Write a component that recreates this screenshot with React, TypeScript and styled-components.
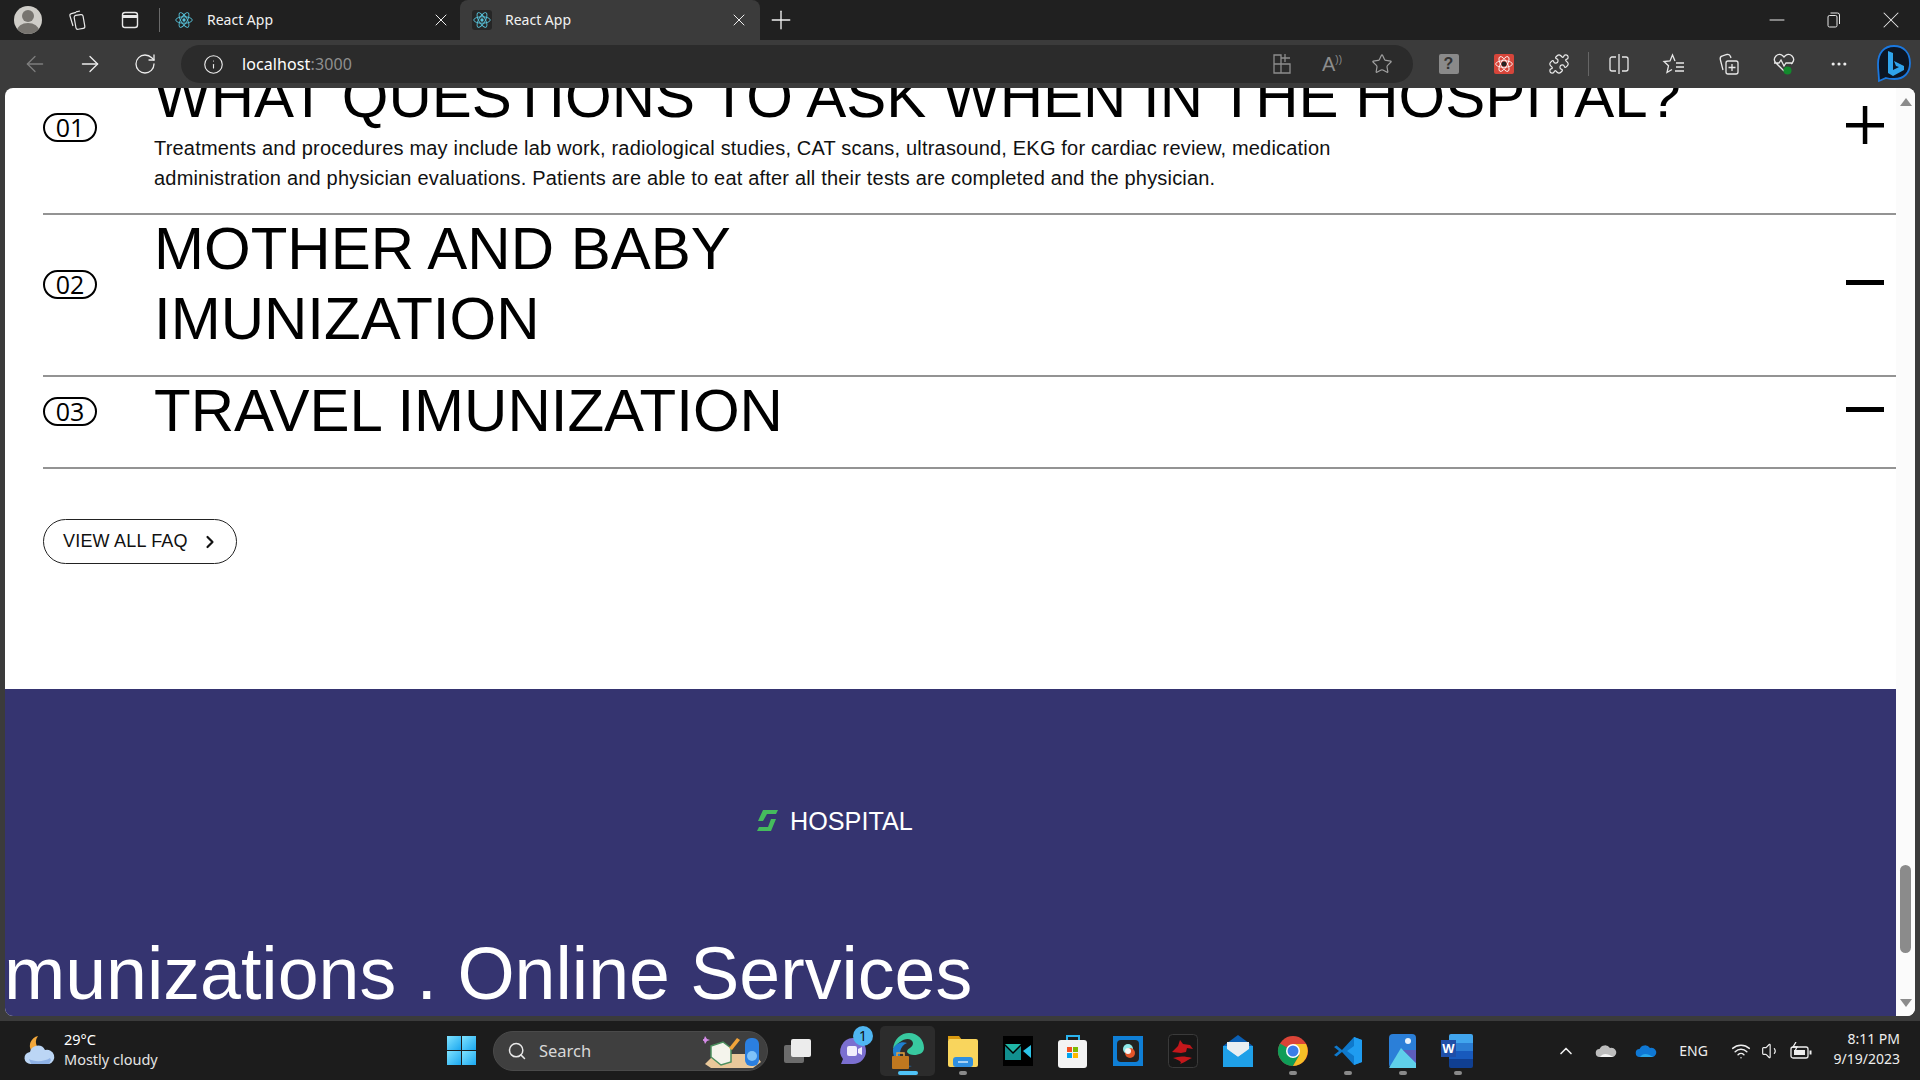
import React from 'react';
import styled, { createGlobalStyle } from 'styled-components';
import {
  ArrowLeft,
  ArrowRight,
  ChevronRight,
  ChevronUp,
  Info,
  Minus,
  MoreHorizontal,
  Plus,
  Puzzle,
  RotateCw,
  Search,
  Star,
  Volume1,
  Wifi,
  X,
} from 'lucide-react';

const GlobalStyle = createGlobalStyle`
  html, body {
    margin: 0;
    padding: 0;
    width: 1920px;
    height: 1080px;
    overflow: hidden;
    background: #3b3b3b;
    font-family: "Liberation Sans", Arial, sans-serif;
  }
  * { box-sizing: border-box; }
`;

const Screen = styled.div`
  width: 1920px;
  height: 1080px;
  display: flex;
  flex-direction: column;
`;

/* ---------- browser chrome ---------- */
const TabStrip = styled.div`
  height: 40px;
  background: #202020;
  display: flex;
  align-items: center;
  color: #fff;
  flex: none;
`;

const Avatar = styled.div`
  width: 28px;
  height: 28px;
  margin-left: 14px;
  border-radius: 50%;
  background: #cfcdc8;
  overflow: hidden;
  flex: none;
`;

const StripSlot = styled.div<{ $first?: boolean; $narrow?: boolean }>`
  width: ${(p) => (p.$narrow ? '42px' : '53px')};
  margin-left: ${(p) => (p.$first ? '8px' : '0')};
  display: flex;
  justify-content: center;
  align-items: center;
  flex: none;
`;

const StripDivider = styled.div`
  width: 1px;
  height: 24px;
  background: #6a6a6a;
  margin: 0 3px 0 3px;
  flex: none;
`;

const Tab = styled.div<{ $active?: boolean }>`
  width: ${(p) => (p.$active ? '300px' : '297px')};
  height: 40px;
  display: flex;
  align-items: center;
  padding-left: ${(p) => (p.$active ? '12px' : '11px')};
  padding-right: ${(p) => (p.$active ? '11px' : '9px')};
  background: ${(p) => (p.$active ? '#3b3b3b' : 'transparent')};
  border-radius: 8px 8px 0 0;
  flex: none;
`;

const FaviconBox = styled.div<{ $active?: boolean }>`
  width: 20px;
  height: 20px;
  display: flex;
  align-items: center;
  justify-content: center;
  background: ${(p) => (p.$active ? '#262626' : 'transparent')};
  border-radius: 3px;
  flex: none;
`;

const TabTitle = styled.span`
  margin-left: 13px;
  padding-bottom: 2px;
  font: 14px "Noto Sans", sans-serif;
  color: #f2f2f2;
  flex: 1;
`;

const WindowControls = styled.div`
  margin-left: auto;
  display: flex;
  align-items: center;
`;

const WindowButton = styled.div`
  width: 57px;
  display: flex;
  justify-content: center;
  align-items: center;
  &:last-child { margin-right: 1px; }
`;

const Toolbar = styled.div`
  height: 48px;
  background: #3b3b3b;
  display: flex;
  align-items: center;
  padding-left: 7px;
  flex: none;
`;

const ToolSlot = styled.div`
  width: 55px;
  height: 38px;
  display: flex;
  align-items: center;
  justify-content: center;
  flex: none;
  color: #ececec;
`;

const AddressBar = styled.div`
  width: 1232px;
  height: 38px;
  margin: 0 8px 0 9px;
  border-radius: 19px;
  background: #2b2b2b;
  display: flex;
  align-items: center;
  padding-left: 22px;
  padding-right: 6px;
  flex: none;
`;

const UrlText = styled.div`
  margin-left: 18px;
  font: 16px "Noto Sans", sans-serif;
  letter-spacing: 0.1px;
  color: #fff;
  span { color: #8f8f8f; }
`;

const AddressActions = styled.div`
  margin-left: auto;
  display: flex;
  color: #8d8d8d;
  ${ToolSlot} { width: 50px; color: #8d8d8d; }
`;

const ReadAloud = styled.span`
  font: 20px "Liberation Sans", sans-serif;
  color: #8d8d8d;
  sup { font-size: 10px; }
`;

const ToolDivider = styled.div`
  width: 1px;
  height: 24px;
  margin: 0 2px;
  background: #666;
  flex: none;
`;

const ExtIcon = styled.div<{ $bg: string }>`
  width: 20px;
  height: 20px;
  border-radius: 2px;
  background: ${(p) => p.$bg};
  color: #333;
  font: bold 16px/20px "Liberation Sans", sans-serif;
  text-align: center;
  display: flex;
  align-items: center;
  justify-content: center;
`;

/* ---------- page ---------- */
const Viewport = styled.div`
  height: 928px;
  padding: 0 5px;
  background: #3b3b3b;
  flex: none;
`;

const Page = styled.div`
  height: 100%;
  background: #fff;
  border-radius: 8px;
  display: flex;
  overflow: hidden;
`;

const PageBody = styled.div`
  flex: 1;
  min-width: 0;
  overflow: hidden;
  display: flex;
  flex-direction: column;
`;

const FaqSection = styled.section`
  height: 601px;
  padding: 0 0 0 38px;
  flex: none;
`;

const FaqList = styled.div`
  margin-top: -26px;
`;

const FaqRow = styled.div`
  display: flex;
  align-items: center;
  padding-bottom: 21px;
  border-bottom: 2px solid #939393;
  color: #000;
  &:first-child { padding-bottom: 20px; }
`;

const Pill = styled.div`
  width: 54px;
  height: 29px;
  border: 2px solid #000;
  border-radius: 15px;
  font: 25px/25px "Open Sans", sans-serif;
  text-align: center;
  flex: none;
`;

const FaqBody = styled.div`
  margin-left: 57px;
  flex: 1;
`;

const FaqTitle = styled.h3`
  margin: -1px 0 0;
  font: 400 60px/70px "Liberation Sans", Arial, sans-serif;
  white-space: pre-line;
  ${FaqRow}:first-child & { margin-top: 0; }
`;

const FaqText = styled.p`
  margin: 1px 0 0;
  width: 1220px;
  font: 20px/30px "Liberation Sans", Arial, sans-serif;
  letter-spacing: 0.19px;
  color: #111;
`;

const ToggleIcon = styled.div`
  width: 38px;
  margin-right: 12px;
  margin-top: -5px;
  display: flex;
  justify-content: center;
  flex: none;
`;

const ViewAll = styled.button`
  margin-top: 50px;
  width: 194px;
  height: 45px;
  border: 1.5px solid #222;
  border-radius: 23px;
  background: #fff;
  display: flex;
  align-items: center;
  padding: 0 0 0 19px;
  font: 18px "Liberation Sans", Arial, sans-serif;
  letter-spacing: 0.2px;
  color: #111;
  svg { margin-left: 12px; }
`;

const Footer = styled.footer`
  flex: 1;
  background: #353470;
  color: #fff;
  overflow: hidden;
  padding-top: 117px;
`;

const Brand = styled.div`
  margin-left: 751px;
  display: flex;
  align-items: center;
  font: 25.200px/30px "Liberation Sans", Arial, sans-serif;
  gap: 12px;
`;

const Marquee = styled.div`
  margin-top: 93px;
  margin-left: -1px;
  font: 73.500px/90px "Liberation Sans", Arial, sans-serif;
  white-space: nowrap;
`;

const Scrollbar = styled.div`
  width: 19px;
  background: #fbfbfb;
  display: flex;
  flex-direction: column;
  align-items: center;
  flex: none;
  padding: 10px 0 9px;
`;

const Arrow = styled.div<{ $down?: boolean }>`
  width: 0;
  height: 0;
  border-left: 6px solid transparent;
  border-right: 6px solid transparent;
  ${(p) =>
    p.$down ? 'border-top: 8px solid #8b8b8b;' : 'border-bottom: 8px solid #8b8b8b;'}
`;

const Thumb = styled.div`
  width: 11px;
  height: 88px;
  margin: auto 0 46px;
  border-radius: 6px;
  background: #8b8b8b;
`;

/* ---------- taskbar ---------- */
const TaskbarGap = styled.div`
  height: 5px;
  background: #3b3b3b;
  flex: none;
`;

const Taskbar = styled.div`
  flex: 1;
  background: #1c1c1c;
  display: flex;
  align-items: center;
  color: #fff;
  position: relative;
`;

const Weather = styled.div`
  width: 447px;
  display: flex;
  align-items: center;
  padding-left: 24px;
  flex: none;
`;

const WeatherText = styled.div`
  margin-left: 8px;
  padding-bottom: 3px;
  font: 14.500px/20px "Noto Sans", sans-serif;
  color: #e4e4e4;
  div:first-child { color: #fff; }
`;

const StartButton = styled.div`
  width: 29px;
  height: 29px;
  display: grid;
  grid-template-columns: 1fr 1fr;
  gap: 1px;
  flex: none;
`;

const StartPane = styled.div`
  background: linear-gradient(135deg, #7fe3ff, #1aa7f0);
`;

const SearchPill = styled.div`
  width: 275px;
  height: 40px;
  margin-left: 17px;
  border-radius: 20px;
  background: #3f3f3f;
  border: 1px solid #4a4a4a;
  display: flex;
  align-items: center;
  padding-left: 13px;
  font: 16.500px "Noto Sans", sans-serif;
  color: #d8d8d8;
  gap: 12px;
  flex: none;
  svg:last-child { margin-left: auto; margin-right: 6px; }
`;

const RailSpacer = styled.span`
  width: 2px;
  flex: none;
`;

const AppSlot = styled.div<{ $hover?: boolean }>`
  width: 55px;
  height: 50px;
  display: flex;
  align-items: center;
  justify-content: center;
  border-radius: 5px;
  position: relative;
  background: ${(p) => (p.$hover ? '#2c2c2c' : 'transparent')};
  flex: none;
`;

const RunDot = styled.div<{ $active?: boolean }>`
  position: absolute;
  bottom: 1px;
  left: 50%;
  width: ${(p) => (p.$active ? '20px' : '8px')};
  height: 4px;
  transform: translateX(-50%);
  border-radius: 2px;
  background: ${(p) => (p.$active ? '#4fc3f7' : '#8a8a8a')};
`;

const Badge = styled.div`
  position: absolute;
  top: 0;
  right: 7px;
  width: 20px;
  height: 20px;
  border-radius: 50%;
  background: #4fb6f2;
  color: #111;
  font: 14px/20px "Noto Sans", sans-serif;
  text-align: center;
`;

const Tray = styled.div`
  margin-left: auto;
  display: flex;
  align-items: center;
  padding-right: 20px;
`;

const TraySlot = styled.div<{ $w: number }>`
  width: ${(p) => p.$w}px;
  display: flex;
  justify-content: center;
  align-items: center;
  font: 14px "Noto Sans", sans-serif;
  color: #eee;
`;

const Clock = styled.div`
  margin-left: 14px;
  padding-bottom: 3px;
  text-align: right;
  font: 14px/20px "Noto Sans", sans-serif;
  color: #eee;
`;

/* ---------- drawn icons ---------- */
const ReactLogo = () => (
  <svg width="18" height="18" viewBox="-12 -12 24 24" fill="none" stroke="#58c4dc" strokeWidth="1.2">
    <circle r="2.2" fill="#58c4dc" stroke="none" />
    <ellipse rx="11" ry="4.3" />
    <ellipse rx="11" ry="4.3" transform="rotate(60)" />
    <ellipse rx="11" ry="4.3" transform="rotate(120)" />
  </svg>
);

const CollectionsStack = () => (
  <svg width="22" height="22" viewBox="0 0 22 22" fill="none" stroke="#e8e8e8" strokeWidth="1.2">
    <rect x="9" y="6" width="9" height="14" rx="2" transform="rotate(-10 13 13)" />
    <path d="M7 17 4 7a2 2 0 0 1 1.400-2.400L10 3.400" />
    <path d="M10 2.800 14 2" />
  </svg>
);

const TabsIcon = () => (
  <svg width="20" height="20" viewBox="0 0 20 20" fill="none" stroke="#e8e8e8" strokeWidth="1.4">
    <rect x="2.500" y="2.500" width="15" height="15" rx="2.500" />
    <path d="M2.500 6.500h15" strokeWidth="3" />
  </svg>
);

const RestoreIcon = () => (
  <svg width="14" height="16" viewBox="0 0 14 16" fill="none" stroke="#e8e8e8" strokeWidth="1">
    <rect x="1" y="3.500" width="9" height="11.500" rx="1.500" />
    <path d="M3.500 1h7a2 2 0 0 1 2 2v9" />
  </svg>
);

const GridPlus = () => (
  <svg width="20" height="24" viewBox="0 0 20 24" fill="none" stroke="#8d8d8d" strokeWidth="1.3">
    <path d="M2 3h7v18H2zM2 12h16v9H9M13 2v8M9.500 6H18" />
  </svg>
);

const SplitIcon = () => (
  <svg width="22" height="24" viewBox="0 0 22 24" fill="none" stroke="#e8e8e8" strokeWidth="1.3">
    <path d="M8 5H4a2 2 0 0 0-2 2v10a2 2 0 0 0 2 2h4M14 5h4a2 2 0 0 1 2 2v10a2 2 0 0 1-2 2h-4M11 2v20" />
  </svg>
);

const FavoritesIcon = () => (
  <svg width="24" height="24" viewBox="0 0 24 24" fill="none" stroke="#e8e8e8" strokeWidth="1.3">
    <path d="M13 9 10.500 3 8 9l-6 .6 4.500 4.200L5 20.500l5-3" />
    <path d="M14 11h8M14 15h8M13 19h9" />
  </svg>
);

const CollectionsIcon = () => (
  <svg width="22" height="24" viewBox="0 0 22 24" fill="none" stroke="#e8e8e8" strokeWidth="1.3">
    <rect x="8" y="9" width="12" height="13" rx="2" />
    <path d="M14 12v7M10.500 15.500h7M5 18 2.300 7.500a3 3 0 0 1 2.200-3.600L9 2.500a3 3 0 0 1 3.500 2L13 6" />
  </svg>
);

const HealthIcon = () => (
  <svg width="24" height="26" viewBox="0 0 24 26">
    <path
      d="M12 20 3.500 11.500a5 5 0 0 1 7-7L12 6l1.500-1.500a5 5 0 0 1 7 7L19 13M2 12h5l2-3 3 6 2-3h7"
      fill="none"
      stroke="#e8e8e8"
      strokeWidth="1.3"
    />
    <circle cx="15.500" cy="19.500" r="4" fill="#138a2d" />
  </svg>
);

const BingLogo = () => (
  <svg width="38" height="40" viewBox="0 0 38 40">
    <path
      d="M19 2C9 2 3 9 3 20c0 6 1 12 1 17l7-3c3 1 5 1 8 1 10 0 16-6 16-16S29 2 19 2z"
      fill="#0c1524"
      stroke="#1a78e0"
      strokeWidth="1.800"
    />
    <path d="M13 7l5 2v17l6-3-3-1-2-5 10 5v4l-11 6-5-3z" fill="#2fa3ec" />
  </svg>
);

const AtomExt = () => (
  <svg width="20" height="20" viewBox="-12 -12 24 24" fill="none" stroke="#fff" strokeWidth="1">
    <ellipse rx="10" ry="4" />
    <ellipse rx="10" ry="4" transform="rotate(60)" />
    <ellipse rx="10" ry="4" transform="rotate(120)" />
    <circle r="3" fill="#222" stroke="none" />
  </svg>
);

const HospitalMark = () => (
  <svg width="22" height="22" viewBox="0 0 22 22" fill="#45bb5d">
    <path d="M7 0H22L20 4H11L7 11H2z" />
    <path d="M15 9h5l-5 12H1l2-4h9z" />
  </svg>
);

const PlusMark = () => (
  <svg width="38" height="38" viewBox="0 0 38 38" fill="#000">
    <rect x="0" y="17" width="38" height="4.500" />
    <rect x="16.800" y="0" width="4.500" height="38" />
  </svg>
);

const MinusMark = () => (
  <svg width="38" height="38" viewBox="0 0 38 38" fill="#000">
    <rect x="0" y="17" width="38" height="5" />
  </svg>
);

const WeatherIcon = () => (
  <svg width="32" height="32" viewBox="0 0 32 32">
    <path d="M14 1a10 10 0 0 0 8 16H8A10 10 0 0 1 14 1z" fill="#f3a83b" />
    <path d="M7 29a6 6 0 0 1-1-12 8 8 0 0 1 15-2 7 7 0 0 1 4 14z" fill="#bcd6f5" />
    <path d="M5 24c5 3 15 3 21-1l1 2-2 4H7z" fill="#8fb2e6" />
  </svg>
);

const SearchArt = () => (
  <svg width="58" height="38" viewBox="0 0 58 38">
    <path d="M2 32 12 22h40l6 8-8 6H8z" fill="#e9c89a" />
    <path d="M8 14 20 10l8 6v14l-10 3-10-8z" fill="#f4f4ec" stroke="#4b8f5e" strokeWidth="1.500" />
    <path d="M26 16 34 6l3 2-8 10z" fill="#f2a43a" />
    <rect x="42" y="6" width="14" height="28" rx="6" fill="#2b7fe0" />
    <circle cx="49" cy="24" r="5" fill="#7fc2f8" />
    <path d="M2 4l2 3 3 1-3 1-2 3-1-3-3-1 3-1z" fill="#d58be8" />
  </svg>
);

const TaskView = () => (
  <svg width="30" height="30" viewBox="0 0 30 30">
    <rect x="1" y="9" width="20" height="18" rx="2" fill="#6c6c6c" />
    <rect x="8" y="3" width="20" height="18" rx="2" fill="#ececec" />
  </svg>
);

const TeamsIcon = () => (
  <svg width="32" height="32" viewBox="0 0 32 32">
    <path d="M16 3a13 13 0 0 1 0 26H4l2-5A13 13 0 0 1 16 3z" fill="#7b6fd0" />
    <rect x="10" y="11" width="10" height="10" rx="2" fill="#f1eefc" />
    <path d="m21 14 4-2v8l-4-2z" fill="#f1eefc" />
  </svg>
);

const EdgeIcon = () => (
  <svg width="34" height="38" viewBox="0 0 34 38">
    <path d="M2 17C3 7 10 1 18 1c9 0 15 7 15 15 0 5-5 7-10 7-3 0-6-1-7-3 0-4 6-4 6-9-1-5-8-5-13-1-3 2-5 4-7 7z" fill="#38c9a0" />
    <path d="M2 17c3-6 9-8 14-6-7 3-9 11-5 18 2 3 6 5 10 5-10 3-20-6-19-17z" fill="#1f7fd0" />
    <rect x="1" y="24" width="17" height="13" rx="1" fill="#c0781f" />
    <path d="M6 24v-3h7v3" fill="none" stroke="#e3a13f" strokeWidth="1.500" />
  </svg>
);

const FolderIcon = () => (
  <svg width="32" height="36" viewBox="0 0 32 36">
    <path d="M1 3h11l3 4H1z" fill="#d99a10" />
    <rect x="1" y="6" width="30" height="28" rx="2" fill="#f9d55d" />
    <rect x="6" y="24" width="20" height="10" rx="3" fill="#2f8fe0" />
    <path d="M11 29h10" stroke="#cfe7fb" strokeWidth="1.500" />
  </svg>
);

const MailApp = () => (
  <svg width="30" height="30" viewBox="0 0 30 30">
    <rect width="30" height="30" fill="#000" />
    <path d="M2 8h16l-8 8z" fill="#1fb6a6" />
    <path d="M2 24V10l8 8 8-8v14z" fill="#118f8f" />
    <path d="M20 15l8-6v13z" fill="#2dc4e8" />
  </svg>
);

const StoreIcon = () => (
  <svg width="30" height="36" viewBox="0 0 30 36">
    <path d="M9 8V3h12v5" fill="none" stroke="#2bb3ee" strokeWidth="2" />
    <rect y="7" width="29" height="28" rx="3" fill="#f3f3f3" />
    <rect x="9" y="14" width="5" height="5" fill="#f25022" />
    <rect x="15" y="14" width="5" height="5" fill="#7fba00" />
    <rect x="9" y="20" width="5" height="5" fill="#00a4ef" />
    <rect x="15" y="20" width="5" height="5" fill="#ffb900" />
  </svg>
);

const DarkApp = () => (
  <svg width="30" height="30" viewBox="0 0 30 30">
    <rect width="30" height="30" fill="#0f7fd6" />
    <rect x="4" y="4" width="22" height="22" rx="4" fill="#222" />
    <circle cx="15" cy="13" r="5" fill="#8fe8e8" />
    <circle cx="17" cy="17" r="5" fill="#e2562a" />
    <circle cx="15" cy="15" r="3" fill="#f6f6f6" />
  </svg>
);

const DragonApp = () => (
  <svg width="30" height="34" viewBox="0 0 30 34">
    <rect x="0.500" y="0.500" width="29" height="33" rx="4" fill="#171717" stroke="#3a3a3a" />
    <path d="M4 18 10 12l2-6 3 4 7 1 3 4-6-1-1 4-5 1zM5 24c6-2 12-2 19 0-5 2-6 4-12 6 2-2 1-3-7-6z" fill="#c4171b" />
  </svg>
);

const MailIcon = () => (
  <svg width="30" height="34" viewBox="0 0 30 34">
    <path d="M15 1 30 12v21H0V12z" fill="#0a5fb4" />
    <rect y="12" width="30" height="21" fill="#23a5ee" />
    <path d="M4 8h22v8l-11 7L4 16z" fill="#e8eef2" />
    <path d="M0 12l15 11 15-11v21H0z" fill="#1fa0e8" />
  </svg>
);

const ChromeIcon = () => (
  <svg width="32" height="32" viewBox="0 0 32 32">
    <circle cx="16" cy="16" r="15" fill="#db4437" />
    <path d="M16 16 3 8.500A15 15 0 0 0 16 31l6.500-11z" fill="#0f9d58" />
    <path d="M16 9h13a15 15 0 0 1-13 22l6.500-11z" fill="#f6bf26" />
    <circle cx="16" cy="16" r="7" fill="#fff" />
    <circle cx="16" cy="16" r="5.500" fill="#3a7de8" />
  </svg>
);

const VsCodeIcon = () => (
  <svg width="30" height="30" viewBox="0 0 30 30">
    <path d="M21 1 9 14 3.500 9.500 1 11l5 4-5 4 2.500 1.500L9 16l12 13 8-3V4z" fill="#0f79cc" />
    <path d="M21 1l8 3v22l-8 3V20l-7-5 7-5z" fill="#1f9cf0" />
  </svg>
);

const PhotosIcon = () => (
  <svg width="28" height="34" viewBox="0 0 28 34">
    <rect width="27" height="34" rx="4" fill="#2b7fd8" />
    <path d="M0 34 12 14l15 15v5z" fill="#5fd0ea" />
    <path d="M14 16l13 0v13z" fill="#6a55b5" opacity="0.8" />
    <circle cx="19" cy="7" r="3" fill="#e8f2fb" />
  </svg>
);

const WordLetter = styled.span`
  position: absolute;
  left: 11px;
  top: 14px;
  width: 15px;
  height: 17px;
  background: #1f4fa8;
  color: #fff;
  font: bold 13px/17px "Liberation Sans", sans-serif;
  text-align: center;
`;

const WordSheet = styled.div`
  width: 24px;
  height: 34px;
  margin-left: 6px;
  border-radius: 2px;
  background: linear-gradient(#41a5ee 0 25%, #2b7cd3 25% 50%, #185abd 50% 75%, #103f91 75%);
`;

const apps = [
  { icon: <TaskView /> },
  { icon: <TeamsIcon />, badge: '1' },
  { icon: <EdgeIcon />, hover: true, dot: 'active' },
  { icon: <FolderIcon />, dot: 'idle' },
  { icon: <MailApp /> },
  { icon: <StoreIcon /> },
  { icon: <DarkApp /> },
  { icon: <DragonApp /> },
  { icon: <MailIcon /> },
  { icon: <ChromeIcon />, dot: 'idle' },
  { icon: <VsCodeIcon />, dot: 'idle' },
  { icon: <PhotosIcon />, dot: 'idle' },
  {
    icon: (
      <>
        <WordSheet />
        <WordLetter>W</WordLetter>
      </>
    ),
    dot: 'idle',
  },
];

const faqs = [
  {
    num: '01',
    title: 'WHAT QUESTIONS TO ASK WHEN IN THE HOSPITAL?',
    text: 'Treatments and procedures may include lab work, radiological studies, CAT scans, ultrasound, EKG for cardiac review, medication administration and physician evaluations. Patients are able to eat after all their tests are completed and the physician.',
    open: true,
  },
  { num: '02', title: 'MOTHER AND BABY\nIMUNIZATION' },
  { num: '03', title: 'TRAVEL IMUNIZATION' },
];

function App(): JSX.Element {
  return (
    <Screen>
      <GlobalStyle />
      <TabStrip>
        <Avatar>
          <svg width="28" height="28" viewBox="0 0 28 28">
            <circle cx="14" cy="10" r="6" fill="#77746f" />
            <ellipse cx="14" cy="25" rx="11" ry="8" fill="#77746f" />
          </svg>
        </Avatar>
        <StripSlot $first>
          <CollectionsStack />
        </StripSlot>
        <StripSlot>
          <TabsIcon />
        </StripSlot>
        <StripDivider />
        <Tab>
          <FaviconBox>
            <ReactLogo />
          </FaviconBox>
          <TabTitle>React App</TabTitle>
          <X size={20} color="#eee" strokeWidth={1.2} />
        </Tab>
        <Tab $active>
          <FaviconBox $active>
            <ReactLogo />
          </FaviconBox>
          <TabTitle>React App</TabTitle>
          <X size={20} color="#eee" strokeWidth={1.2} />
        </Tab>
        <StripSlot $narrow>
          <Plus size={30} color="#eee" strokeWidth={1.1} />
        </StripSlot>
        <WindowControls>
          <WindowButton>
            <Minus size={24} color="#e8e8e8" strokeWidth={1} />
          </WindowButton>
          <WindowButton>
            <RestoreIcon />
          </WindowButton>
          <WindowButton>
            <X size={28} color="#e8e8e8" strokeWidth={0.9} />
          </WindowButton>
        </WindowControls>
      </TabStrip>

      <Toolbar>
        <ToolSlot>
          <ArrowLeft size={26} color="#7d7d7d" strokeWidth={1.2} />
        </ToolSlot>
        <ToolSlot>
          <ArrowRight size={26} strokeWidth={1.2} />
        </ToolSlot>
        <ToolSlot>
          <RotateCw size={24} strokeWidth={1.3} />
        </ToolSlot>
        <AddressBar>
          <Info size={21} color="#ececec" strokeWidth={1.3} />
          <UrlText>
            localhost<span>:3000</span>
          </UrlText>
          <AddressActions>
            <ToolSlot>
              <GridPlus />
            </ToolSlot>
            <ToolSlot>
              <ReadAloud>
                A<sup>))</sup>
              </ReadAloud>
            </ToolSlot>
            <ToolSlot>
              <Star size={22} color="#a0a0a0" strokeWidth={1.3} />
            </ToolSlot>
          </AddressActions>
        </AddressBar>
        <ToolSlot>
          <ExtIcon $bg="#8a8a8a">?</ExtIcon>
        </ToolSlot>
        <ToolSlot>
          <ExtIcon $bg="#d6453a">
            <AtomExt />
          </ExtIcon>
        </ToolSlot>
        <ToolSlot>
          <Puzzle size={22} strokeWidth={1.3} />
        </ToolSlot>
        <ToolDivider />
        <ToolSlot>
          <SplitIcon />
        </ToolSlot>
        <ToolSlot>
          <FavoritesIcon />
        </ToolSlot>
        <ToolSlot>
          <CollectionsIcon />
        </ToolSlot>
        <ToolSlot>
          <HealthIcon />
        </ToolSlot>
        <ToolSlot>
          <MoreHorizontal size={20} strokeWidth={1.8} />
        </ToolSlot>
        <ToolSlot>
          <BingLogo />
        </ToolSlot>
      </Toolbar>

      <Viewport>
        <Page>
          <PageBody>
            <FaqSection>
              <FaqList>
                {faqs.map((faq) => (
                  <FaqRow key={faq.num}>
                    <Pill>{faq.num}</Pill>
                    <FaqBody>
                      <FaqTitle>{faq.title}</FaqTitle>
                      {faq.text && <FaqText>{faq.text}</FaqText>}
                    </FaqBody>
                    <ToggleIcon>{faq.open ? <PlusMark /> : <MinusMark />}</ToggleIcon>
                  </FaqRow>
                ))}
              </FaqList>
              <ViewAll>
                VIEW ALL FAQ
                <ChevronRight size={20} strokeWidth={2.6} color="#111" />
              </ViewAll>
            </FaqSection>
            <Footer>
              <Brand>
                <HospitalMark />
                HOSPITAL
              </Brand>
              <Marquee>munizations . Online Services</Marquee>
            </Footer>
          </PageBody>
          <Scrollbar>
            <Arrow />
            <Thumb />
            <Arrow $down />
          </Scrollbar>
        </Page>
      </Viewport>
      <TaskbarGap />

      <Taskbar>
        <Weather>
          <WeatherIcon />
          <WeatherText>
            <div>29°C</div>
            <div>Mostly cloudy</div>
          </WeatherText>
        </Weather>
        <StartButton>
          <StartPane />
          <StartPane />
          <StartPane />
          <StartPane />
        </StartButton>
        <SearchPill>
          <Search size={20} color="#e8e8e8" strokeWidth={1.8} />
          Search
          <SearchArt />
        </SearchPill>
        <RailSpacer />
        {apps.map((app, index) => (
          <AppSlot key={index} $hover={app.hover}>
            {app.icon}
            {app.badge && <Badge>{app.badge}</Badge>}
            {app.dot && <RunDot $active={app.dot === 'active'} />}
          </AppSlot>
        ))}
        <Tray>
          <TraySlot $w={40}>
            <ChevronUp size={20} strokeWidth={2} />
          </TraySlot>
          <TraySlot $w={40}>
            <svg width="22" height="14" viewBox="0 0 22 14">
              <path d="M5 13a4 4 0 0 1-.500-8A6 6 0 0 1 15 4a4.500 4.500 0 0 1 3 9z" fill="#bdbdbd" />
              <path d="M5 13c3-4 7-4 13 0z" fill="#f4f4f4" />
            </svg>
          </TraySlot>
          <TraySlot $w={40}>
            <svg width="22" height="14" viewBox="0 0 22 14">
              <path d="M5 13a4 4 0 0 1-.500-8A6 6 0 0 1 15 4a4.500 4.500 0 0 1 3 9z" fill="#0f78d4" />
              <path d="M5 13c3-4 7-4 13 0z" fill="#28a8ea" />
            </svg>
          </TraySlot>
          <TraySlot $w={56}>ENG</TraySlot>
          <TraySlot $w={38}>
            <Wifi size={20} strokeWidth={1.8} />
          </TraySlot>
          <TraySlot $w={22}>
            <Volume1 size={20} strokeWidth={1.4} />
          </TraySlot>
          <TraySlot $w={38}>
            <svg width="22" height="18" viewBox="0 0 22 18" fill="none" stroke="#eee" strokeWidth="1.3">
              <rect x="1" y="5" width="17" height="11" rx="2" />
              <rect x="4" y="8" width="11" height="5" fill="#eee" stroke="none" />
              <path d="M20.500 8.500v4" strokeWidth="2" />
              <path d="M6 0 3 5h4L5 9" />
            </svg>
          </TraySlot>
          <Clock>
            <div>8:11 PM</div>
            <div>9/19/2023</div>
          </Clock>
        </Tray>
      </Taskbar>
    </Screen>
  );
}

export default App;
